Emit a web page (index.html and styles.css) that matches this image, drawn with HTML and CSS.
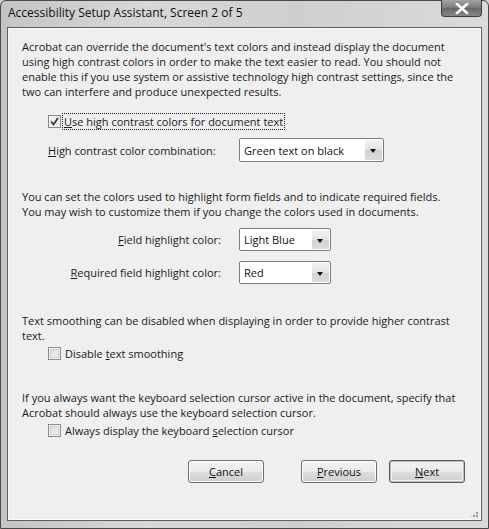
FILE: index.html
```html
<!DOCTYPE html>
<html>
<head>
<meta charset="utf-8">
<link rel="stylesheet" href="styles.css">
</head>
<body>
<div class="window">
  <div class="titlebar">
    <span class="title">Accessibility Setup Assistant, Screen 2 of 5</span>
    <span class="close"><svg width="16" height="11" viewBox="0 0 16 11"><path d="M3 1 L13 10 M13 1 L3 10" stroke="#fff" stroke-width="2.6" stroke-linecap="square"/></svg></span>
  </div>
  <div class="client">
    <p class="p1">Acrobat can override the document's text colors and instead display the document using high contrast colors in order to make the text easier to read. You should not enable this if you use system or assistive technology high contrast settings, since the two can interfere and produce unexpected results.</p>
    <div class="check first"><span class="box checked"><svg width="9" height="9" viewBox="0 0 9 9"><path d="M1 4.5 L3.5 7.5 L8 1" stroke="#3a3a3a" stroke-width="1.8" fill="none"/></svg></span><span class="focus"><u>U</u>se high contrast colors for document text</span></div>
    <div class="row combo"><span class="label left"><u>H</u>igh contrast color combination:</span><span class="select wide">Green text on black<span class="arrow"></span></span></div>
    <p class="p2">You can set the colors used to highlight form fields and to indicate required fields. You may wish to customize them if you change the colors used in documents.</p>
    <div class="row field"><span class="label"><u>F</u>ield highlight color:</span><span class="select">Light Blue<span class="arrow"></span></span></div>
    <div class="row req"><span class="label"><u>R</u>equired field highlight color:</span><span class="select">Red<span class="arrow"></span></span></div>
    <p class="p3">Text smoothing can be disabled when displaying in order to provide higher contrast text.</p>
    <div class="check second"><span class="box"></span><span class="plain">Disable <u>t</u>ext smoothing</span></div>
    <p class="p4">If you always want the keyboard selection cursor active in the document, specify that Acrobat should always use the keyboard selection cursor.</p>
    <div class="check third"><span class="box"></span><span class="plain">Always display the keyboard <u>s</u>election cursor</span></div>
    <div class="buttons">
      <span class="btn cancel"><u>C</u>ancel</span>
      <span class="btn prev"><u>P</u>revious</span>
      <span class="btn next default"><u>N</u>ext</span>
    </div>
    <div class="grip"></div>
  </div>
</div>
</body>
</html>
```
FILE: styles.css
```css
html, body {
  margin: 0;
  padding: 0;
  background: #d0d0d0;
}
body {
  width: 489px;
  height: 529px;
  overflow: hidden;
  font-family: "Open Sans", "Noto Sans", sans-serif;
  font-size: 11px;
  color: #1a1a1a;
}
.window {
  width: 489px;
  height: 529px;
  box-sizing: border-box;
  border: 1px solid #4a4a4a;
  border-radius: 6px 6px 0 0;
  background: linear-gradient(90deg, #c4c4c4 0%, #d8d8d8 30%, #cfcfcf 60%, #dadada 100%);
  padding: 0 6px 7px 6px;
  display: flex;
  flex-direction: column;
}
.titlebar {
  height: 26px;
  display: flex;
  align-items: flex-start;
  justify-content: space-between;
  flex: none;
}
.title {
  margin-top: 3px;
  margin-left: 1px;
  font-size: 12px;
  color: #111;
}
.close {
  width: 41px;
  height: 17px;
  margin-top: -1px;
  box-sizing: border-box;
  border: 1px solid #3c3c3c;
  border-top: none;
  border-radius: 0 0 4px 4px;
  background: linear-gradient(#a4a4a4, #7a7a7a 50%, #666 51%, #888);
  display: flex;
  align-items: center;
  justify-content: center;
}
.client {
  flex: 1;
  position: relative;
  border: 1px solid #5e5e5e;
  background: #efefef;
  padding: 11px 14px 0 14px;
  box-shadow: inset 0 0 0 1px #fafafa;
}
p {
  margin: 0;
  line-height: 15px;
}
.p1 { width: 440px; }
.p2 { margin-top: 27px; width: 434px; }
.p3 { margin-top: 29px; width: 450px; }
.p4 { margin-top: 28px; width: 450px; }

.check {
  display: flex;
  align-items: center;
  height: 18px;
  margin-left: 26px;
}
.check.first { margin-top: 13px; }
.check.second { margin-top: 1px; }
.check.third { margin-top: 1px; }
.box {
  width: 13px;
  height: 13px;
  box-sizing: border-box;
  border: 1px solid #8a8a8a;
  background: linear-gradient(135deg, #d8d8d8, #f6f6f6);
  box-shadow: inset 0 0 0 1px #f4f4f4, inset 0 0 0 2px #cfcfcf;
  display: flex;
  align-items: center;
  justify-content: center;
  flex: none;
}
.box.checked { box-shadow: inset 0 0 0 1px #f4f4f4; background: #f0f0f0; }
.focus {
  margin-left: 2px;
  padding: 0 1px;
  line-height: 15px;
  outline: 1px dotted #222;
}
.plain { margin-left: 4px; }

.row {
  display: flex;
  align-items: center;
}
.row.combo { margin-top: 8px; }
.row.field { margin-top: 9px; }
.row.req { margin-top: 10px; }
.label {
  width: 187px;
  margin-left: 12px;
  text-align: right;
  flex: none;
}
.label.left { text-align: left; margin-left: 26px; width: 173px; }
.select {
  position: relative;
  width: 92px;
  height: 23px;
  box-sizing: border-box;
  margin-left: 18px;
  border: 1px solid #7d7d7d;
  border-radius: 2px;
  background: #fff;
  padding-left: 4px;
  display: flex;
  align-items: center;
  color: #111;
}
.select.wide { width: 145px; height: 24px; }
.arrow {
  position: absolute;
  right: 1px;
  top: 1px;
  bottom: 1px;
  width: 17px;
  background: linear-gradient(#f4f4f4, #e2e2e2 50%, #d2d2d2 51%, #dcdcdc);
}
.arrow::after {
  content: "";
  position: absolute;
  left: 5px;
  top: 9px;
  border-left: 3.5px solid transparent;
  border-right: 3.5px solid transparent;
  border-top: 4px solid #111;
}

.buttons {
  display: flex;
  margin-top: 21px;
  margin-left: 166px;
}
.btn {
  width: 76px;
  height: 23px;
  box-sizing: border-box;
  border: 1px solid #707070;
  border-radius: 3px;
  background: linear-gradient(#f2f2f2, #ebebeb 50%, #dddddd 51%, #cfcfcf);
  box-shadow: inset 0 0 0 1px #fcfcfc;
  display: flex;
  align-items: center;
  justify-content: center;
  color: #111;
}
.btn.prev { margin-left: 37px; }
.btn.next { margin-left: 12px; }
.btn.default {
  border-color: #5a5a5a;
  box-shadow: inset 0 0 0 1px #bdbdbd, inset 0 0 0 2px #f0f0f0;
}
.grip {
  position: absolute;
  right: 2px;
  bottom: 2px;
  width: 9px;
  height: 9px;
  background:
    radial-gradient(circle at 1px 1px, #9a9a9a 1px, transparent 1.2px) 0 0 / 3px 3px;
  clip-path: polygon(100% 0, 100% 100%, 0 100%);
}
```
